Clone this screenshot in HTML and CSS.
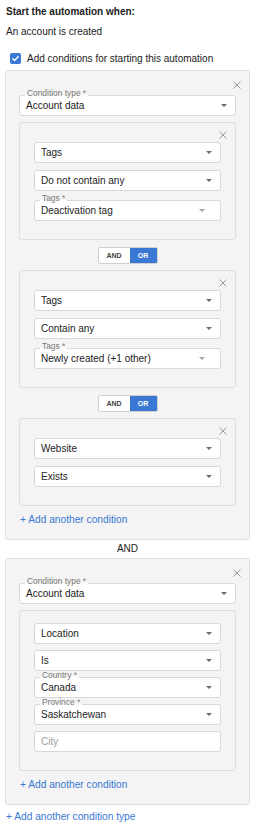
FILE: index.html
```html
<!DOCTYPE html>
<html lang="en">
<head>
<meta charset="utf-8">
<title>Automation conditions</title>
<link rel="stylesheet" href="styles.css">
</head>
<body>
<div class="page">
  <div class="heading">Start the automation when:</div>
  <div class="trigger">An account is created</div>
  <label class="check-row">
    <span class="checkbox"><svg width="11" height="11" viewBox="0 0 11 11"><rect width="11" height="11" rx="2" fill="#3b79d4"/><path d="M2.8 5.7 L4.6 7.5 L8.3 3.5" fill="none" stroke="#fff" stroke-width="1.3" stroke-linecap="round" stroke-linejoin="round"/></svg></span>
    <span>Add conditions for starting this automation</span>
  </label>

  <div class="group">
    <span class="close close--group"><svg width="8" height="8" viewBox="0 0 8 8"><path d="M0.5 0.5 L7.5 7.5 M7.5 0.5 L0.5 7.5" stroke="#9a9a9a" stroke-width="1" fill="none"/></svg></span>
    <div class="field">
      <span class="field-label">Condition type *</span>
      <span class="field-value">Account data</span>
      <span class="caret"></span>
    </div>

    <div class="cond">
      <span class="close close--cond"><svg width="8" height="8" viewBox="0 0 8 8"><path d="M0.5 0.5 L7.5 7.5 M7.5 0.5 L0.5 7.5" stroke="#9a9a9a" stroke-width="1" fill="none"/></svg></span>
      <div class="field"><span class="field-value">Tags</span><span class="caret"></span></div>
      <div class="field"><span class="field-value">Do not contain any</span><span class="caret"></span></div>
      <div class="field field--spaced">
        <span class="field-label">Tags *</span>
        <span class="field-value">Deactivation tag</span>
        <span class="caret caret--muted"></span>
      </div>
    </div>

    <div class="toggle"><span class="toggle-opt">AND</span><span class="toggle-opt toggle-opt--on">OR</span></div>

    <div class="cond">
      <span class="close close--cond"><svg width="8" height="8" viewBox="0 0 8 8"><path d="M0.5 0.5 L7.5 7.5 M7.5 0.5 L0.5 7.5" stroke="#9a9a9a" stroke-width="1" fill="none"/></svg></span>
      <div class="field"><span class="field-value">Tags</span><span class="caret"></span></div>
      <div class="field"><span class="field-value">Contain any</span><span class="caret"></span></div>
      <div class="field field--spaced">
        <span class="field-label">Tags *</span>
        <span class="field-value">Newly created (+1 other)</span>
        <span class="caret caret--muted"></span>
      </div>
    </div>

    <div class="toggle"><span class="toggle-opt">AND</span><span class="toggle-opt toggle-opt--on">OR</span></div>

    <div class="cond">
      <span class="close close--cond"><svg width="8" height="8" viewBox="0 0 8 8"><path d="M0.5 0.5 L7.5 7.5 M7.5 0.5 L0.5 7.5" stroke="#9a9a9a" stroke-width="1" fill="none"/></svg></span>
      <div class="field"><span class="field-value">Website</span><span class="caret"></span></div>
      <div class="field"><span class="field-value">Exists</span><span class="caret"></span></div>
    </div>

    <a class="add-link" href="#">+ Add another condition</a>
  </div>

  <div class="and-sep">AND</div>

  <div class="group">
    <span class="close close--group"><svg width="8" height="8" viewBox="0 0 8 8"><path d="M0.5 0.5 L7.5 7.5 M7.5 0.5 L0.5 7.5" stroke="#9a9a9a" stroke-width="1" fill="none"/></svg></span>
    <div class="field">
      <span class="field-label">Condition type *</span>
      <span class="field-value">Account data</span>
      <span class="caret"></span>
    </div>

    <div class="cond cond--tight">
      <div class="field"><span class="field-value">Location</span><span class="caret"></span></div>
      <div class="field"><span class="field-value">Is</span><span class="caret"></span></div>
      <div class="field">
        <span class="field-label">Country *</span>
        <span class="field-value">Canada</span>
        <span class="caret"></span>
      </div>
      <div class="field">
        <span class="field-label">Province *</span>
        <span class="field-value">Saskatchewan</span>
        <span class="caret"></span>
      </div>
      <input class="field field--input" type="text" placeholder="City">
    </div>

    <a class="add-link" href="#">+ Add another condition</a>
  </div>

  <a class="add-link add-link--type" href="#">+ Add another condition type</a>
</div>
</body>
</html>
```

FILE: styles.css
```css
* { box-sizing: border-box; }

html, body {
  margin: 0;
  padding: 0;
  background: #fff;
}

body {
  font-family: "Liberation Sans", Helvetica, Arial, sans-serif;
  font-size: 10px;
  color: #222;
}

.page {
  width: 258px;
  padding: 5px 8px 0 5px;
  display: flex;
  flex-direction: column;
}

.heading {
  font-weight: bold;
  line-height: 14px;
  padding-left: 1px;
  margin-bottom: 6px;
}

.trigger {
  line-height: 14px;
  padding-left: 1px;
  margin-bottom: 12px;
}

.check-row {
  display: flex;
  align-items: center;
  gap: 6px;
  height: 14px;
  padding-left: 5px;
  margin-bottom: 5px;
}

.checkbox {
  display: flex;
  width: 11px;
  height: 11px;
}

.group {
  position: relative;
  display: flex;
  flex-direction: column;
  background: #f4f4f4;
  border: 1px solid #e0e0e0;
  border-radius: 3px;
  padding: 24px 13px 12px;
}

.cond {
  position: relative;
  display: flex;
  flex-direction: column;
  gap: 7px;
  margin-top: 6px;
  background: #f4f4f4;
  border: 1px solid #dedede;
  border-radius: 3px;
  padding: 19px 14px 18px;
}

.cond--tight {
  gap: 6px;
  padding-top: 12px;
}

.close {
  position: absolute;
  display: flex;
  width: 8px;
  height: 8px;
}

.close--group {
  top: 10px;
  right: 8px;
}

.close--cond {
  top: 8px;
  right: 8px;
}

.field {
  position: relative;
  display: flex;
  align-items: center;
  height: 21px;
  padding: 0 6px;
  background: #fff;
  border: 1px solid #d8d8d8;
  border-radius: 3px;
}

.field--spaced {
  margin-top: 2px;
}

.field-value {
  flex: 1;
  line-height: 12px;
  white-space: nowrap;
  color: #222;
}

.field-label {
  position: absolute;
  left: 5px;
  top: -7px;
  padding: 0 2px;
  font-size: 8.4px;
  line-height: 9px;
  color: #777;
  background: linear-gradient(to bottom, transparent 6px, #fff 6px);
}

.caret {
  width: 0;
  height: 0;
  margin-right: 2px;
  border-left: 3px solid transparent;
  border-right: 3px solid transparent;
  border-top: 3px solid #6e6e6e;
}

.caret--muted {
  margin-right: 9px;
  border-top-color: #a8a8a8;
}

.field--input {
  font-family: inherit;
  font-size: 10px;
  color: #222;
  outline: none;
  width: 100%;
}

.field--input::placeholder {
  color: #a0a0a0;
}

.toggle {
  display: flex;
  align-self: center;
  height: 17px;
  margin: 7px 0 6px;
  border: 1px solid #cfcfcf;
  border-radius: 2px;
  overflow: hidden;
  font-size: 7px;
  font-weight: bold;
}

.toggle-opt {
  display: flex;
  align-items: center;
  justify-content: center;
  width: 31px;
  background: #fff;
  color: #444;
}

.toggle-opt--on {
  width: 27px;
  background: #3a78d3;
  color: #fff;
}

.cond + .toggle + .cond {
  margin-top: 0;
}

.add-link {
  display: block;
  margin-top: 7px;
  line-height: 14px;
  padding-left: 1px;
  color: #3a78d3;
  text-decoration: none;
  font-size: 10.2px;
}

.add-link--type {
  margin-top: 5px;
}

.and-sep {
  text-align: center;
  line-height: 18px;
  height: 18px;
  color: #222;
}
```
